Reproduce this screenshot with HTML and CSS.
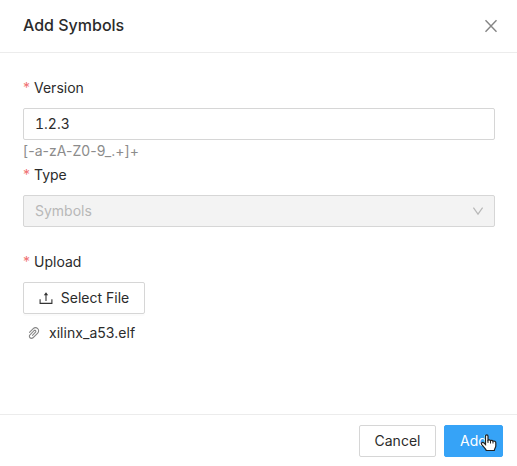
FILE: index.html
```html
<!DOCTYPE html>
<html lang="en">
<head>
<meta charset="utf-8">
<title>Add Symbols</title>
<link rel="stylesheet" href="styles.css">
</head>
<body>
<div class="modal">
  <header class="header">
    <h1 class="title">Add Symbols</h1>
    <svg class="close" viewBox="0 0 16 16"><path d="M2.500 2.200 13.500 13.800M13.500 2.200 2.500 13.800"/></svg>
  </header>
  <main class="body">
    <div class="label"><span class="required">*</span><span>Version</span></div>
    <div class="field"><span class="value">1.2.3</span></div>
    <div class="hint">[-a-zA-Z0-9_.+]+</div>
    <div class="label"><span class="required">*</span><span>Type</span></div>
    <div class="field disabled"><span>Symbols</span><svg class="chevron" viewBox="0 0 12 12"><path d="M1.4 2.6 6 9.2 10.6 2.6"/></svg></div>
    <div class="label upload-label"><span class="required">*</span><span>Upload</span></div>
    <div class="button select-file">
      <svg class="upload" viewBox="0 0 14 14"><path d="M1.1 8.3V12.4H12.9V8.3M7 10V3"/><path class="arrow" d="M7 1.2 9.2 4.2H4.8Z"/></svg>
      <span>Select File</span>
    </div>
    <div class="file">
      <svg class="clip" viewBox="120 120 784 784"><path d="M779.3 196.600c-94.200-94.200-247.600-94.200-341.700 0l-261 260.800c-1.700 1.700-2.600 4-2.600 6.400s.9 4.700 2.600 6.400l36.900 36.900a9 9 0 0 0 12.700 0l261-260.800c32.400-32.400 75.500-50.200 121.300-50.200s88.900 17.800 121.200 50.200c32.400 32.400 50.200 75.500 50.200 121.200 0 45.800-17.800 88.800-50.200 121.200l-266 265.900-43.100 43.100c-40.300 40.300-105.800 40.300-146.100 0-19.500-19.500-30.200-45.400-30.200-73s10.700-53.500 30.200-73l263.900-263.800c6.700-6.600 15.500-10.300 24.900-10.300h.1c9.400 0 18.100 3.700 24.700 10.300 6.700 6.700 10.300 15.500 10.300 24.900 0 9.300-3.700 18.100-10.300 24.700L372.400 653c-1.700 1.700-2.600 4-2.600 6.400s.9 4.700 2.600 6.400l36.900 36.900a9 9 0 0 0 12.700 0l215.600-215.600c19.900-19.900 30.800-46.300 30.800-74.400s-11-54.600-30.800-74.400c-41.100-41.100-107.900-41-149 0L463 364 224.800 602.100A172.220 172.220 0 0 0 174 724.800c0 46.300 18.100 89.800 50.800 122.500 33.900 33.800 78.300 50.700 122.700 50.700 44.400 0 88.800-16.900 122.600-50.700l309.200-309C824.800 492.700 850 432 850 367.500c.1-64.600-25.100-125.300-70.700-170.900z"/></svg>
      <span class="file-name">xilinx_a53.elf</span>
    </div>
  </main>
  <footer class="footer">
    <div class="button cancel">Cancel</div>
    <div class="button primary">Add
      <svg class="cursor" viewBox="0 0 18 18"><path d="M5.500 10.500V2.200C5.500.5 8 .5 8 2.200V6.200C8.600 5.500 10.300 5.700 10.500 6.700 11.200 6.100 12.800 6.300 13 7.300 14 6.700 15.800 7.300 15.800 8.800V12C15.800 13.500 14.500 14.500 14.300 16.500H6.300C5.700 14.500 3.500 12.800 1.700 10.600.8 9.200 2.300 7.800 3.800 8.800Z"/><path class="fingers" d="M8 6V9M10.500 7V9.500M13 7.500V9.500"/></svg>
    </div>
  </footer>
</div>
</body>
</html>
```
FILE: styles.css
```css
* { box-sizing: border-box; }
body {
  margin: 0;
  background: #fff;
  color: #2b2b2b;
  font: 14px/22px Inter, "Liberation Sans", sans-serif;
}
.modal { height: 466px; display: flex; flex-direction: column; overflow: hidden; }
.header {
  height: 53px;
  flex: none;
  display: flex;
  align-items: center;
  justify-content: space-between;
  padding: 0 18px 0 23px;
  border-bottom: 1px solid #ececec;
}
.title { margin: 0 0 2px; font-size: 16px; font-weight: 500; line-height: 22px; }
.close { width: 16px; height: 16px; fill: none; stroke: #858585; stroke-width: 1.4; }
.body { flex: 1; padding: 19px 22px 0 23px; }
.label { display: flex; align-items: center; height: 32px; margin-bottom: 4px; }
.required { width: 11px; color: #f07173; }
.field {
  height: 32px;
  display: flex;
  align-items: center;
  justify-content: space-between;
  padding: 0 10px 0 11px;
  border: 1px solid #d6d6d6;
  border-radius: 2px;
}
.value { font-variant-numeric: tabular-nums; }
.disabled { background: #f3f3f3; color: #b8b8b8; }
.chevron { width: 12px; height: 12px; fill: none; stroke: #b8b8b8; stroke-width: 1.2; }
.hint { height: 19px; line-height: 22px; color: #8c8c8c; letter-spacing: .04px; }
.upload-label { margin-top: 19px; }
.button {
  height: 32px;
  display: flex;
  align-items: center;
  justify-content: center;
  border: 1px solid #d6d6d6;
  border-radius: 2px;
}
.select-file { width: 122px; gap: 8px; box-shadow: 0 2px 0 rgba(0, 0, 0, .015); }
.upload { width: 14px; height: 14px; fill: none; stroke: #333; stroke-width: 1.1; }
.arrow { fill: #333; stroke: none; }
.file { display: flex; align-items: center; height: 22px; margin-top: 8px; padding-left: 5px; gap: 9px; }
.clip { width: 12px; height: 12px; fill: #858585; }
.file-name { letter-spacing: .04px; }
.footer {
  height: 52px;
  flex: none;
  display: flex;
  justify-content: flex-end;
  gap: 8px;
  padding: 10px 14px;
  border-top: 1px solid #ececec;
}
.cancel { width: 77px; }
.primary { position: relative; width: 59px; background: #36a3f7; border-color: #36a3f7; color: #fff; }
.cursor { position: absolute; left: 35px; top: 8px; width: 18px; height: 18px; fill: #fff; stroke: #222; stroke-width: 1.2; }
.fingers { fill: none; stroke-width: 1; }
```
